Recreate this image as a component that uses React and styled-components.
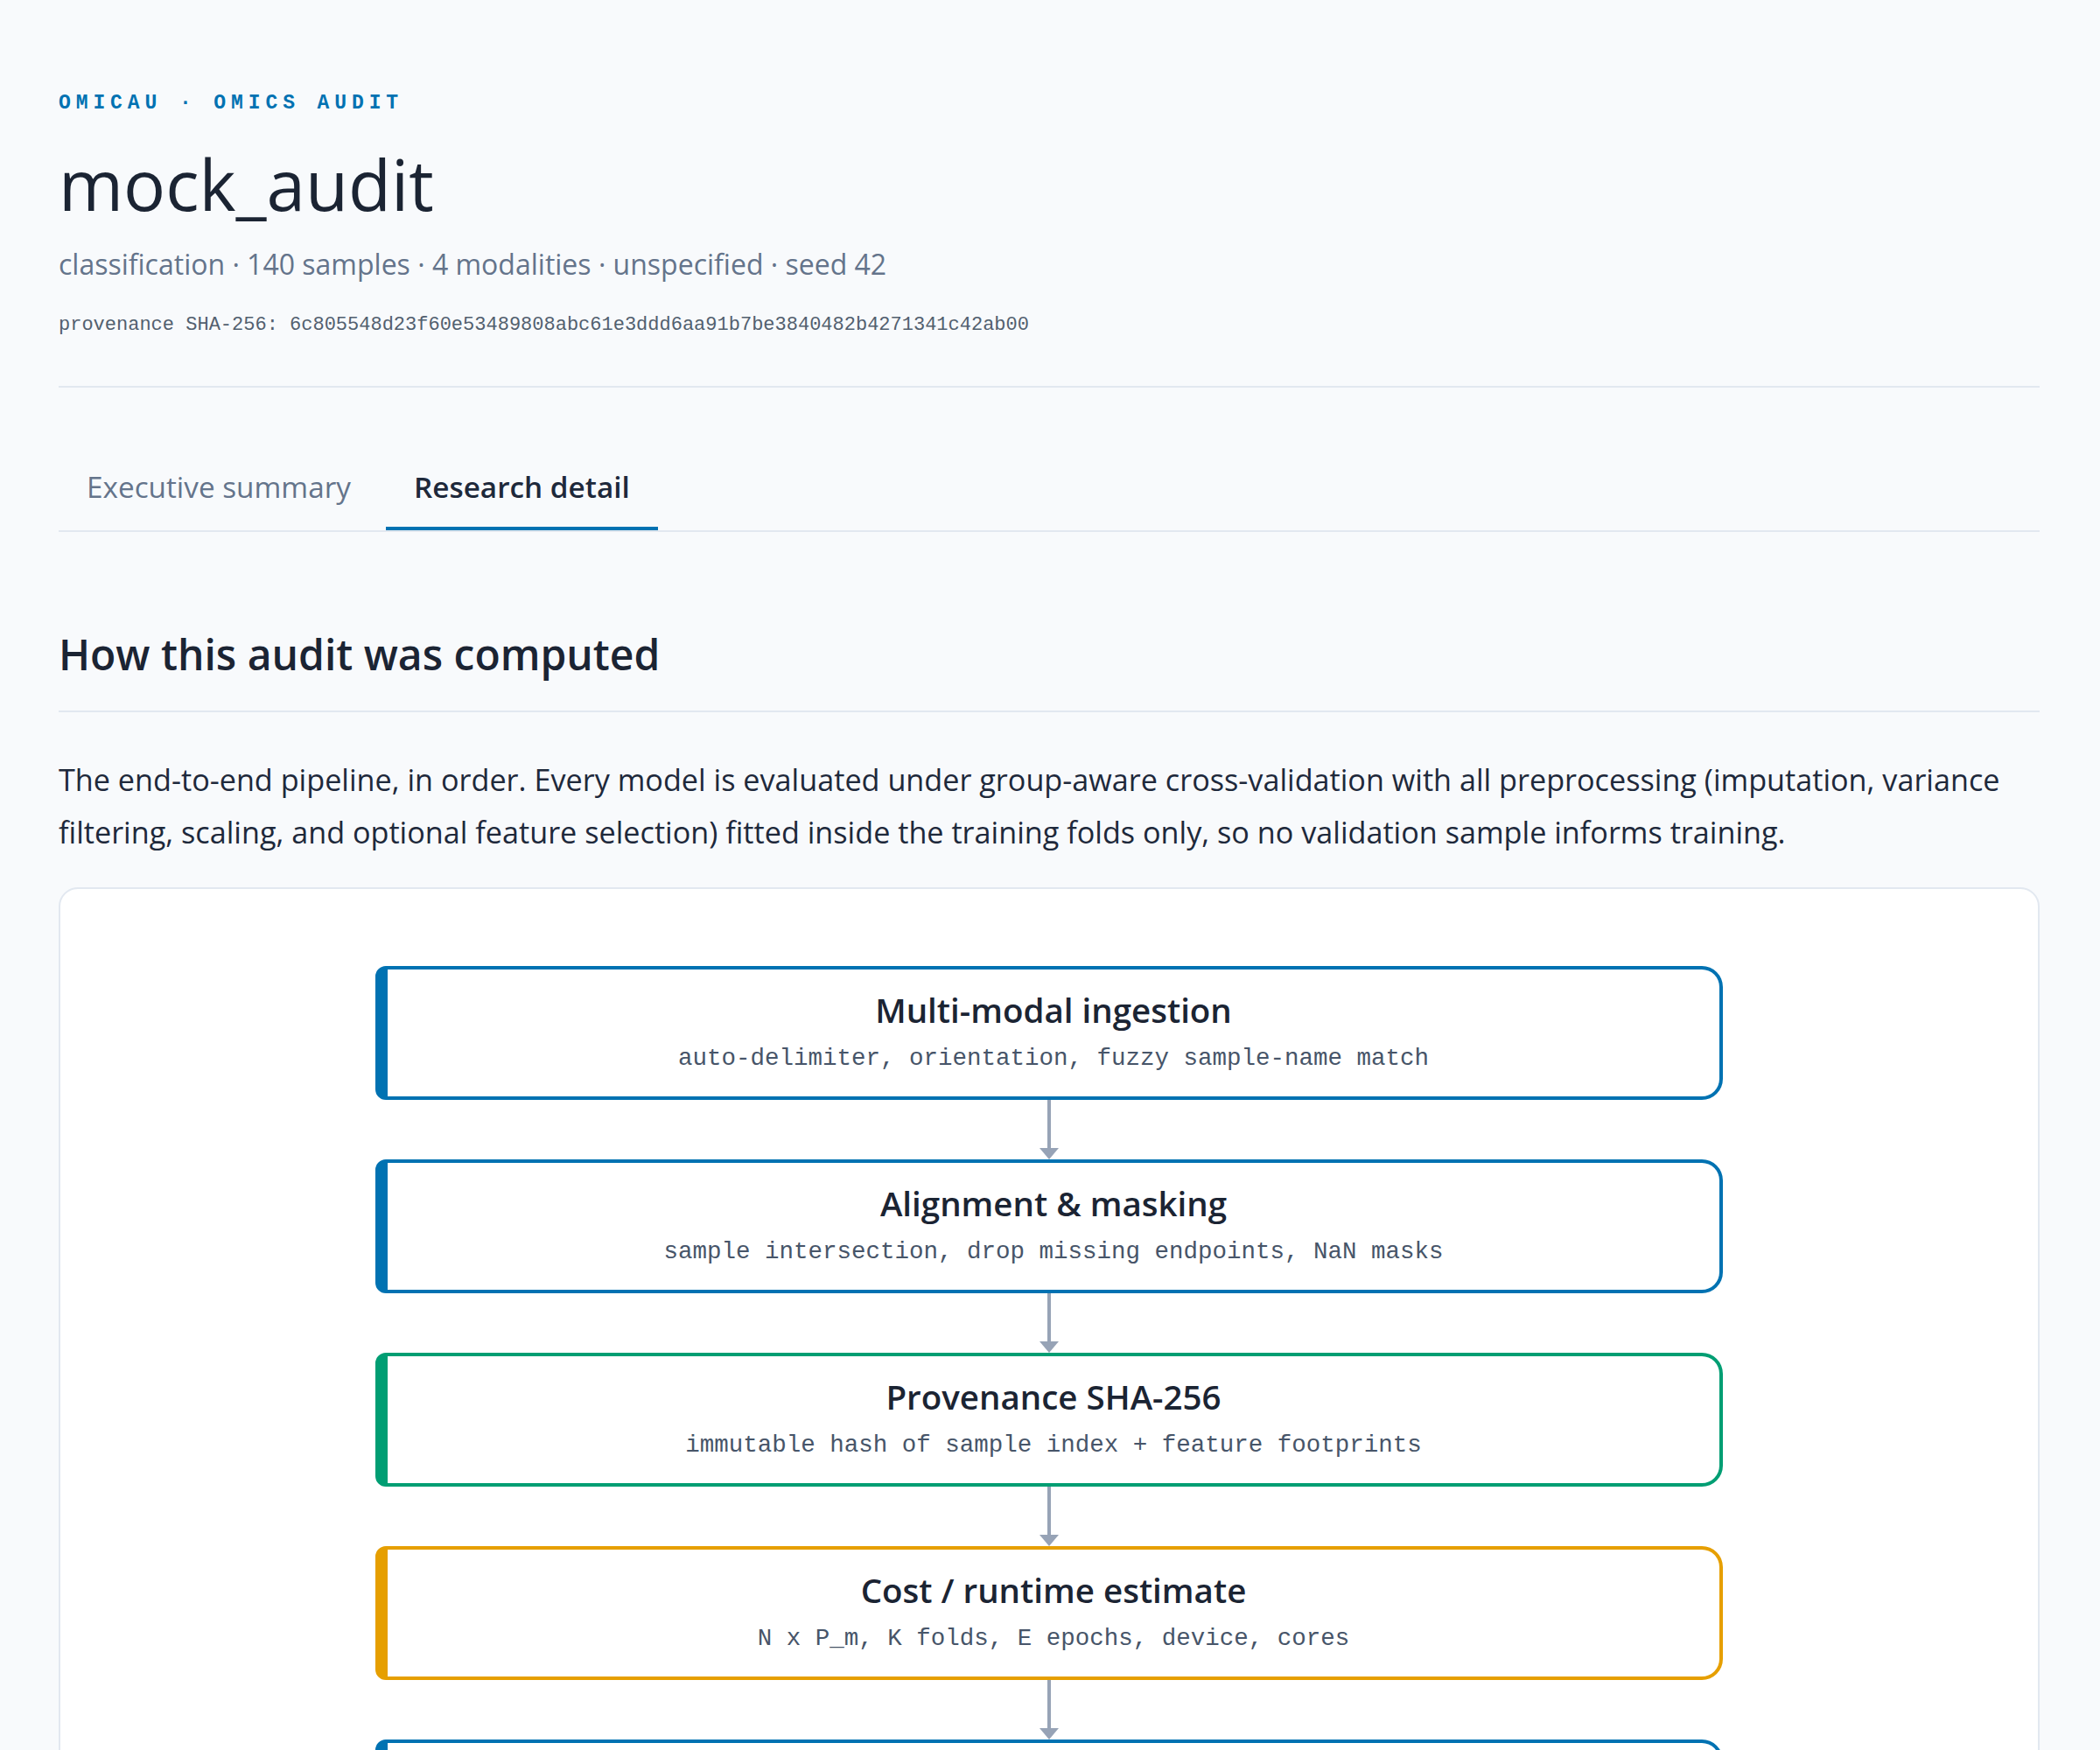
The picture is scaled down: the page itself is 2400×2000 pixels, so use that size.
import React from 'react';
import styled, { createGlobalStyle } from 'styled-components';

const steps = [
    { title: 'Multi-modal ingestion', detail: 'auto-delimiter, orientation, fuzzy sample-name match', tone: 'blue' },
    { title: 'Alignment & masking', detail: 'sample intersection, drop missing endpoints, NaN masks', tone: 'blue' },
    { title: 'Provenance SHA-256', detail: 'immutable hash of sample index + feature footprints', tone: 'green' },
    { title: 'Cost / runtime estimate', detail: 'N x P_m, K folds, E epochs, device, cores', tone: 'orange' },
    { title: 'Group-aware cross-validation', detail: 'stratified group K-fold, leakage-safe splits', tone: 'blue' },
    { title: 'In-fold preprocessing', detail: 'imputation, variance filter, scaling, feature selection', tone: 'blue' },
];

const tones = {
    blue: '#0072b2',
    green: '#009e73',
    orange: '#e69f00',
};

export default function App() {
    return (
        <>
            <GlobalStyle />
            <Page>
                <Header>
                    <Eyebrow>OMICAU · OMICS AUDIT</Eyebrow>
                    <Title>mock_audit</Title>
                    <Meta>classification · 140 samples · 4 modalities · unspecified · seed 42</Meta>
                    <Hash>provenance SHA-256: 6c805548d23f60e53489808abc61e3ddd6aa91b7be3840482b4271341c42ab00</Hash>
                </Header>

                <Tabs>
                    <Tab>Executive summary</Tab>
                    <Tab $active>Research detail</Tab>
                </Tabs>

                <Section>
                    <SectionTitle>How this audit was computed</SectionTitle>
                    <Lead>
                        The end-to-end pipeline, in order. Every model is evaluated under group-aware cross-validation
                        with all preprocessing (imputation, variance filtering, scaling, and optional feature selection)
                        fitted inside the training folds only, so no validation sample informs training.
                    </Lead>
                    <FlowCard>
                        <Flow>
                            {steps.map((step, i) => (
                                <React.Fragment key={step.title}>
                                    {i > 0 && (
                                        <Connector>
                                            <Shaft />
                                            <Head />
                                        </Connector>
                                    )}
                                    <Node $color={tones[step.tone]}>
                                        <NodeTitle>{step.title}</NodeTitle>
                                        <NodeDetail>{step.detail}</NodeDetail>
                                    </Node>
                                </React.Fragment>
                            ))}
                        </Flow>
                    </FlowCard>
                </Section>
            </Page>
        </>
    );
}

const GlobalStyle = createGlobalStyle`
    * { box-sizing: border-box; }
    body {
        margin: 0;
        background: #f8fafc;
        font-family: "Open Sans", "Noto Sans", sans-serif;
        color: #1e293b;
    }
`;

const Page = styled.main`
    padding: 104px 69px 120px 67px;
`;

const Header = styled.header`
    padding-bottom: 54px;
    border-bottom: 2px solid #e2e8f0;
`;

const Eyebrow = styled.div`
    font-family: "Liberation Mono", monospace;
    font-weight: 700;
    font-size: 23px;
    line-height: 28px;
    letter-spacing: 5.9px;
    color: #0072b2;
`;

const Title = styled.h1`
    margin: 29px 0 0;
    font-size: 80px;
    font-weight: 500;
    line-height: 97px;
    color: #1b2433;
`;

const Meta = styled.p`
    margin: 23px 0 0;
    font-size: 32px;
    line-height: 42px;
    color: #64748b;
`;

const Hash = styled.p`
    margin: 33px 0 0;
    font-family: "Liberation Mono", monospace;
    font-size: 22px;
    line-height: 31px;
    color: #52606f;
`;

const Tabs = styled.nav`
    display: flex;
    gap: 8px;
    margin-top: 71px;
    border-bottom: 2px solid #e2e8f0;
`;

const Tab = styled.div`
    padding: 20px 32px 24px;
    font-size: 33.3px;
    line-height: 44px;
    font-weight: ${(p) => (p.$active ? 600 : 400)};
    color: ${(p) => (p.$active ? '#1e293b' : '#64748b')};
    border-bottom: 4px solid ${(p) => (p.$active ? '#0072b2' : 'transparent')};
`;

const Section = styled.section`
    margin-top: 109px;
`;

const SectionTitle = styled.h2`
    margin: 0;
    padding-bottom: 33px;
    border-bottom: 2px solid #e2e8f0;
    font-size: 48px;
    line-height: 62px;
    font-weight: 600;
    color: #1b2433;
`;

const Lead = styled.p`
    margin: 47px 0 0;
    font-size: 34.2px;
    line-height: 60px;
    color: #1e293b;
`;

const FlowCard = styled.div`
    margin-top: 33px;
    background: #ffffff;
    border: 2px solid #e2e8f0;
    border-radius: 22px;
    padding: 88px 40px 88px;
`;

const Flow = styled.div`
    width: 1540px;
    margin: 0 auto;
    display: flex;
    flex-direction: column;
`;

const Node = styled.div`
    height: 153px;
    padding: 22px 40px 0;
    border: 4px solid ${(p) => p.$color};
    border-left-width: 14px;
    border-radius: 12px 24px 24px 12px;
    background: #ffffff;
    text-align: center;
`;

const NodeTitle = styled.div`
    font-size: 38.5px;
    line-height: 49px;
    font-weight: 600;
    color: #1b2433;
`;

const NodeDetail = styled.div`
    margin-top: 12px;
    font-family: "Liberation Mono", monospace;
    font-size: 27.5px;
    line-height: 38px;
    color: #475569;
`;

const Connector = styled.div`
    height: 68px;
    display: flex;
    flex-direction: column;
    align-items: center;
`;

const Shaft = styled.div`
    flex: 1;
    width: 4px;
    background: #97a3b6;
`;

const Head = styled.div`
    width: 0;
    height: 0;
    border-left: 11.5px solid transparent;
    border-right: 11.5px solid transparent;
    border-top: 13px solid #97a3b6;
`;
